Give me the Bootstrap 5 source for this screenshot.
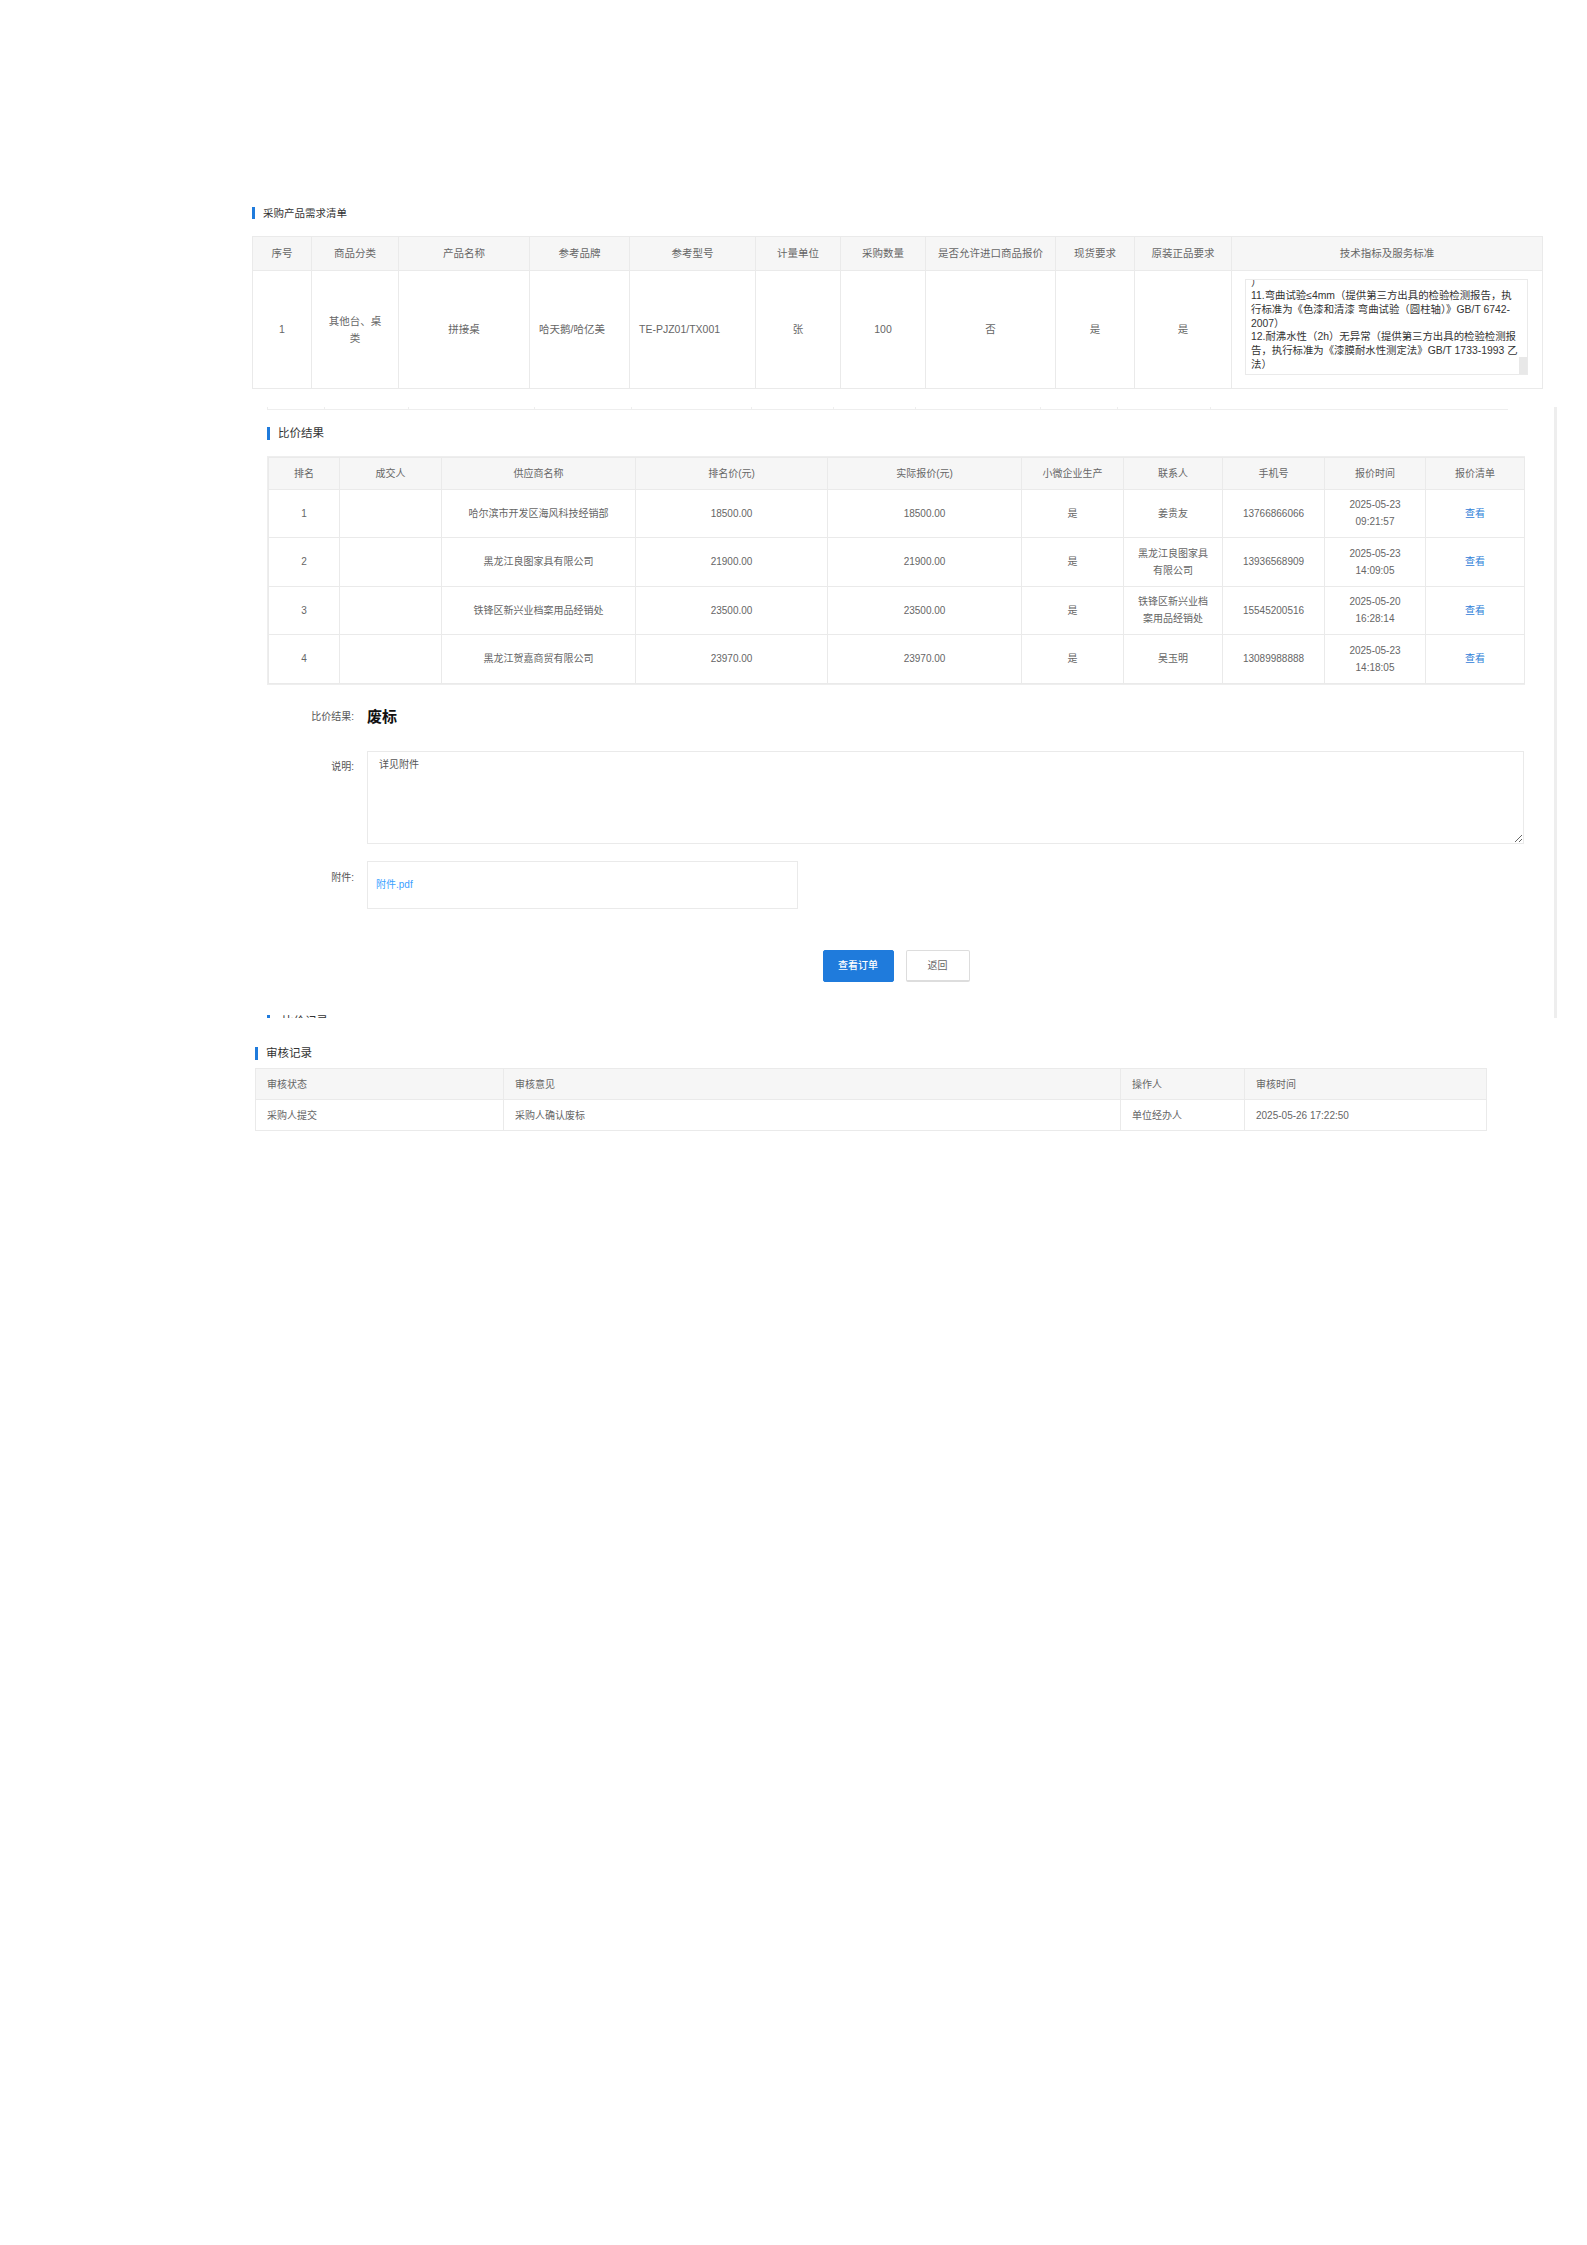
<!DOCTYPE html>
<html lang="zh-CN">
<head>
<meta charset="utf-8">
<title>比价结果</title>
<link rel="stylesheet" href="https://cdn.jsdelivr.net/npm/bootstrap@5.3.0/dist/css/bootstrap.min.css">
<style>
body{background:#fff;font-family:"Liberation Sans","Noto Sans CJK SC",sans-serif;font-size:10px;color:#666}
.page-main{margin-left:252px;width:1305px;padding-top:207px}
.sec-head{border-left:3.5px solid #1f7bdc;padding-left:8px;line-height:13px;color:#333;font-size:11.5px}
.sec-head.small-head{font-size:10.5px;line-height:12px}
.data-tb{table-layout:fixed;--bs-table-border-color:#eaeaea;--bs-table-color:#666;margin:0;color:#666}
.data-tb.data-tb>*>*>*{padding:0 12px;vertical-align:middle;line-height:17px;font-weight:400}
.data-tb thead th{background:#f6f6f6;--bs-table-bg:#f6f6f6}
.tb-one{width:1290px;margin-top:17px;font-size:10.5px}
.tb-one thead tr{height:34px}
.tb-one tbody tr{height:118px}
.tb-one.tb-one.tb-one tbody .cell-left{text-align:left;padding:0 9px}
.c1a{width:59px}.c1b{width:87px}.c1c{width:131px}.c1d{width:100px}.c1e{width:126px}.c1f{width:85px}.c1g{width:85px}.c1h{width:130px}.c1i{width:79px}.c1j{width:97px}.c1k{width:311px}
.tb-one.tb-one.tb-one tbody .spec-cell{padding:0 14px 0 13px}
.spec-box{position:relative;height:96px;margin-bottom:6px;overflow:hidden;border:1px solid #eaeaea;padding:0 8px 0 5px;text-align:left;color:#333;line-height:13.7px;font-size:10.4px}
.spec-text{margin-top:-4px}
.spec-thumb{position:absolute;right:0;bottom:0;width:8px;height:17px;background:#e8e8e8}
.frame-view{margin-top:18px;height:611px;overflow:hidden;border-right:3px solid #eee}
.frame-in{width:1258px;margin-left:15px}
.cut-tb{table-layout:fixed;border-collapse:collapse;width:1240.5px}
.cut-tb td{height:2px;padding:0;border-left:1px solid #eee;border-bottom:1px solid #eee}
.t0{width:57px}.t1{width:84px}.t2{width:126px}.t3{width:97px}.t4{width:120px}.t5{width:82px}.t6{width:125px}.t7{width:76.5px}.t8{width:93.5px}.t9{width:297.5px}
.sec-two{margin-top:17px}
.tb-wrap{margin-top:16px;border:1px solid #eee}
.tb-two{width:1256px}
.tb-two thead tr{height:32px}
.tb-two tbody tr{height:48.5px}
.c2a{width:71px}.c2b{width:102px}.c2c{width:194px}.c2d{width:192px}.c2e{width:194px}.c2f{width:102px}.c2g{width:99px}.c2h{width:102px}.c2i{width:101px}.c2j{width:99px}
.view-link{color:#2f80d8;text-decoration:none}
.form-label-x{width:87px;margin-right:13px;text-align:right;color:#555;flex:none}
.result-row{margin-top:22px;height:20px}
.result-val{font-size:15px;font-weight:700;color:#111;line-height:20px}
.note-row{margin-top:24px}
.note-area{width:1157px;height:93px;border:1px solid #eaeaea;border-radius:0;padding:6px 11px;font-size:10px;line-height:14px;color:#555}
.note-label{padding-top:8px}
.file-row{margin-top:17px}
.file-box{width:431px;height:48px;border:1px solid #eaeaea;padding-left:8px}
.file-box a{color:#3aa0ff;text-decoration:none}
.file-label{padding-top:9px}
.btn-row{margin-top:41px;gap:12px}
.act-btn{height:32px;font-size:10px;border-radius:2px;padding:0;line-height:30px}
.act-main{width:71px;background:#1f7bdc;border-color:#1f7bdc;color:#fff;font-weight:500}
.act-back{width:64px;background:#fff;border:1px solid #ddd;border-bottom-width:2px;color:#666}
.cut-head{margin-top:33px;padding-left:12px}
.sec-three{margin-top:29px;margin-left:3px}
.tb-three{width:1231px;margin:8px 0 0 3px}
.tb-three.tb-three thead th,.tb-three.tb-three tbody td{padding:0 11px}
.tb-three thead tr{height:31px}
.tb-three tbody tr{height:31px}
.c3a{width:248px}.c3b{width:617px}.c3c{width:124px}.c3d{width:242px}
</style>
</head>
<body>
<main class="page-main">
  <div class="sec-head small-head">采购产品需求清单</div>
  <table class="table table-bordered data-tb tb-one text-center">
    <colgroup><col class="c1a"><col class="c1b"><col class="c1c"><col class="c1d"><col class="c1e"><col class="c1f"><col class="c1g"><col class="c1h"><col class="c1i"><col class="c1j"><col class="c1k"></colgroup>
    <thead><tr><th>序号</th><th>商品分类</th><th>产品名称</th><th>参考品牌</th><th>参考型号</th><th>计量单位</th><th>采购数量</th><th>是否允许进口商品报价</th><th>现货要求</th><th>原装正品要求</th><th>技术指标及服务标准</th></tr></thead>
    <tbody><tr><td>1</td><td>其他台、桌<br>类</td><td>拼接桌</td><td class="cell-left">哈天鹅/哈亿美</td><td class="cell-left">TE-PJZ01/TX001</td><td>张</td><td>100</td><td>否</td><td>是</td><td>是</td>
      <td class="spec-cell"><div class="spec-box"><div class="spec-text">）<br>11.弯曲试验≤4mm（提供第三方出具的检验检测报告，执行标准为《色漆和清漆 弯曲试验（圆柱轴）》GB/T 6742-2007）<br>12.耐沸水性（2h）无异常（提供第三方出具的检验检测报告，执行标准为《漆膜耐水性测定法》GB/T 1733-1993 乙法）</div><span class="spec-thumb"></span></div></td></tr></tbody>
  </table>

  <section class="frame-view">
    <div class="frame-in">
      <table class="cut-tb"><colgroup><col class="t0"><col class="t1"><col class="t2"><col class="t3"><col class="t4"><col class="t5"><col class="t5"><col class="t6"><col class="t7"><col class="t8"><col class="t9"></colgroup><tbody><tr><td></td><td></td><td></td><td></td><td></td><td></td><td></td><td></td><td></td><td></td><td></td></tr></tbody></table>

      <div class="sec-head sec-two">比价结果</div>
      <div class="tb-wrap">
      <table class="table table-bordered data-tb tb-two text-center">
        <colgroup><col class="c2a"><col class="c2b"><col class="c2c"><col class="c2d"><col class="c2e"><col class="c2f"><col class="c2g"><col class="c2h"><col class="c2i"><col class="c2j"></colgroup>
        <thead><tr><th>排名</th><th>成交人</th><th>供应商名称</th><th>排名价(元)</th><th>实际报价(元)</th><th>小微企业生产</th><th>联系人</th><th>手机号</th><th>报价时间</th><th>报价清单</th></tr></thead>
        <tbody>
          <tr><td>1</td><td></td><td>哈尔滨市开发区海风科技经销部</td><td>18500.00</td><td>18500.00</td><td>是</td><td>姜贵友</td><td>13766866066</td><td>2025-05-23 09:21:57</td><td><a class="view-link" href="#">查看</a></td></tr>
          <tr><td>2</td><td></td><td>黑龙江良图家具有限公司</td><td>21900.00</td><td>21900.00</td><td>是</td><td>黑龙江良图家具有限公司</td><td>13936568909</td><td>2025-05-23 14:09:05</td><td><a class="view-link" href="#">查看</a></td></tr>
          <tr><td>3</td><td></td><td>铁锋区新兴业档案用品经销处</td><td>23500.00</td><td>23500.00</td><td>是</td><td>铁锋区新兴业档案用品经销处</td><td>15545200516</td><td>2025-05-20 16:28:14</td><td><a class="view-link" href="#">查看</a></td></tr>
          <tr><td>4</td><td></td><td>黑龙江贺嘉商贸有限公司</td><td>23970.00</td><td>23970.00</td><td>是</td><td>吴玉明</td><td>13089988888</td><td>2025-05-23 14:18:05</td><td><a class="view-link" href="#">查看</a></td></tr>
        </tbody>
      </table>
      </div>

      <div class="d-flex align-items-center result-row"><div class="form-label-x">比价结果:</div><div class="result-val">废标</div></div>
      <div class="d-flex note-row"><div class="form-label-x note-label">说明:</div><textarea class="form-control note-area" readonly>详见附件</textarea></div>
      <div class="d-flex file-row"><div class="form-label-x file-label">附件:</div><div class="file-box d-flex align-items-center"><a href="#">附件.pdf</a></div></div>
      <div class="d-flex justify-content-center btn-row"><button type="button" class="btn act-btn act-main">查看订单</button><button type="button" class="btn act-btn act-back">返回</button></div>
      <div class="sec-head cut-head">比价记录</div>
    </div>
  </section>

  <div class="sec-head sec-three">审核记录</div>
  <table class="table table-bordered data-tb tb-three text-start">
    <colgroup><col class="c3a"><col class="c3b"><col class="c3c"><col class="c3d"></colgroup>
    <thead><tr><th>审核状态</th><th>审核意见</th><th>操作人</th><th>审核时间</th></tr></thead>
    <tbody><tr><td>采购人提交</td><td>采购人确认废标</td><td>单位经办人</td><td>2025-05-26 17:22:50</td></tr></tbody>
  </table>
</main>
<script src="https://cdn.jsdelivr.net/npm/bootstrap@5.3.0/dist/js/bootstrap.bundle.min.js"></script>
</body>
</html>
